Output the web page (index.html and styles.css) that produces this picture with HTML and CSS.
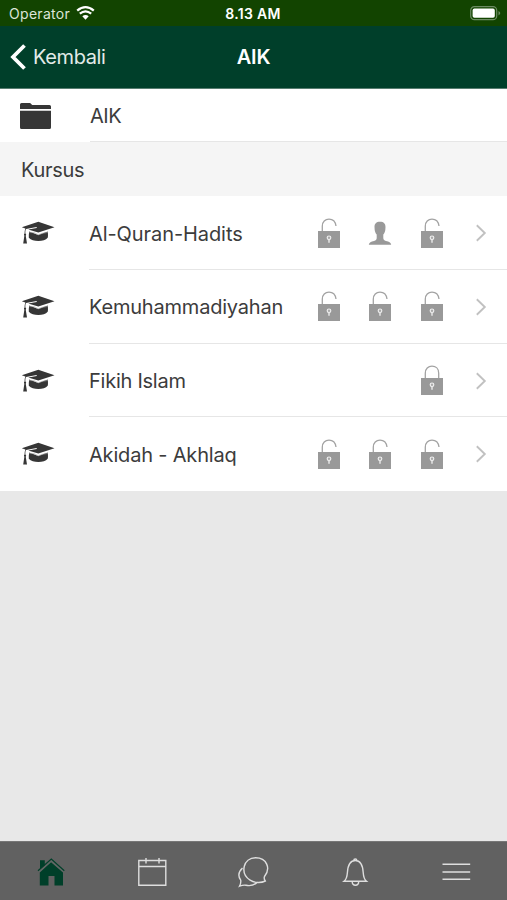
FILE: index.html
```html
<!DOCTYPE html>
<html lang="id">
<head>
<meta charset="utf-8">
<title>AIK</title>
<link rel="stylesheet" href="styles.css">
</head>
<body>
<svg class="defs" width="0" height="0">
  <symbol id="lock-body" viewBox="0 0 24 30">
    <path fill="#999" d="M1 13h22v17H1z"/>
    <circle cx="12" cy="19.8" r="1.8" fill="#aaa" stroke="#eee" stroke-width="1.2"/>
    <path d="M12 21.6v3.2" stroke="#e6e6e6" stroke-width="1.5"/>
  </symbol>
  <symbol id="open" viewBox="0 0 24 30">
    <path d="M5.3 14V8.2C5.3 3.8 8.2 1.2 12 1.2c3.8 0 6.4 2.4 7 6.8" fill="none" stroke="#a3a3a3" stroke-width="1.3"/>
    <use href="#lock-body"/>
  </symbol>
  <symbol id="closed" viewBox="0 0 24 30">
    <path d="M5.3 14V8.2C5.3 3.8 8.2 1.2 12 1.2s6.7 2.6 6.7 7V14" fill="none" stroke="#a3a3a3" stroke-width="1.3"/>
    <use href="#lock-body"/>
  </symbol>
  <symbol id="person" viewBox="0 0 24 30">
    <path fill="#999" d="M12 3.8c-3.8 0-5.6 2-5.5 5.3l.2 2.9c.2 1.9 1 3.4 2 4.6v3.2c0 2-.7 2.6-2.7 3.1-3 .7-4.800 1.200-5.200 3.800h22.400c-.4-2.600-2.200-3.100-5.200-3.800-2-.5-2.700-1.100-2.700-3.100v-3.200c1-1.200 1.800-2.700 2-4.600l.2-2.900c.1-3.300-1.700-5.300-5.500-5.300z"/>
  </symbol>
  <symbol id="chevron" viewBox="0 0 12 18">
    <path d="M1.800 1.200l8 7.800-8 7.800" fill="none" stroke="#c1c1c1" stroke-width="1.900"/>
  </symbol>
  <symbol id="cap" viewBox="0 0 34 24">
    <path fill="#363636" d="M.8 6.300L17.300.8l16.200 5.500L17.300 11.600 7.200 8.500l8.600-1.600-.2-.8L5 7.900c-.5.800-.7 2.300-.6 4.500.9.500 1 1.500.3 2.200l1.300 7.800H2.200l1.200-7.800c-.7-.7-.6-1.700.2-2.200 0-2 .2-3.600.8-4.900z"/>
    <path fill="#363636" d="M8.200 10.500l9 3.400 9.500-3.500c.4 2.300.4 5 0 6.400-1.900 2.200-5.200 3.300-9.300 3.300S9.900 19 7.800 16.800c-.1-2 0-4.200.4-6.300z"/>
    <path d="M8.300 11.600q4.800-1.200 8.900 2.200 4.800-2.200 9.500-2.300" stroke="#aaa" stroke-width=".6" fill="none"/>
  </symbol>
</svg>
<div class="screen">
  <div class="status">
    <div class="carrier"><span>Operator</span>
      <svg width="19" height="14" viewBox="0 0 19 14" fill="none" stroke="#fff"><path d="M1.200 4.600q8.300-6.900 16.600 0M3.800 7.700q5.700-4.700 11.400 0" stroke-width="2.300"/><path d="M6.300 10.300q3.200-2.600 6.400 0L9.500 13.700z" fill="#fff" stroke="none"/></svg>
    </div>
    <div class="time">8.13 AM</div>
    <svg class="battery" width="31" height="15" viewBox="0 0 31 15"><rect x=".7" y=".7" width="26" height="13" rx="3.700" fill="none" stroke="#6c8b62" stroke-width="1.200"/><rect x="2.600" y="2.600" width="22.200" height="9.200" rx="1.800" fill="#fff"/><path d="M28.500 5q3.500 2.200 0 4.500z" fill="#6c8b62"/></svg>
  </div>
  <header class="nav">
    <div class="back">
      <svg width="17" height="26" viewBox="0 0 17 26"><path d="M14.500 1.500L3 13l11.500 11.500" fill="none" stroke="#fff" stroke-width="3.800"/></svg>
      <span>Kembali</span>
    </div>
    <h1>AIK</h1>
  </header>
  <div class="row folder">
    <svg width="31" height="26" viewBox="0 0 30 26" preserveAspectRatio="none" fill="#363636"><path d="M0 6V1.500Q0 0 1.500 0h8.300l2 2h16.700Q30 2 30 3.500V6zM0 7.800h30v16.700q0 1.500-1.500 1.500h-27Q0 26 0 24.500z"/></svg>
    <div class="content"><span class="label aik">AIK</span></div>
  </div>
  <h2>Kursus</h2>
  <div class="row">
    <svg width="34" height="24"><use href="#cap"/></svg>
    <div class="content"><span class="label quran">Al-Quran-Hadits</span>
      <svg class="state"><use href="#open"/></svg><svg class="state"><use href="#person"/></svg><svg class="state"><use href="#open"/></svg><svg class="go"><use href="#chevron"/></svg></div>
  </div>
  <div class="row">
    <svg width="34" height="24"><use href="#cap"/></svg>
    <div class="content"><span class="label kemu">Kemuhammadiyahan</span>
      <svg class="state"><use href="#open"/></svg><svg class="state"><use href="#open"/></svg><svg class="state"><use href="#open"/></svg><svg class="go"><use href="#chevron"/></svg></div>
  </div>
  <div class="row">
    <svg width="34" height="24"><use href="#cap"/></svg>
    <div class="content"><span class="label fikih">Fikih Islam</span>
      <svg class="state"><use href="#closed"/></svg><svg class="go"><use href="#chevron"/></svg></div>
  </div>
  <div class="row last">
    <svg width="34" height="24"><use href="#cap"/></svg>
    <div class="content"><span class="label akidah">Akidah - Akhlaq</span>
      <svg class="state"><use href="#open"/></svg><svg class="state"><use href="#open"/></svg><svg class="state"><use href="#open"/></svg><svg class="go"><use href="#chevron"/></svg></div>
  </div>
  <nav class="tabs">
    <svg viewBox="0 0 32 32"><path fill="#003f29" d="M4.800 15.500L16 5.300l12 10.200V28.500h-8.500v-9.500h-6v9.500h-8.700z"/><path fill="#003f29" d="M5 3.200h4.800v5L5 12z"/><path d="M3 13.700L16.300 2l13 11.700" stroke="#003f29" stroke-width="1.200" fill="none"/><path d="M4 15L16.300 4.300 28.600 15" stroke="#5f706a" stroke-width=".7" fill="none"/></svg>
    <svg viewBox="0 0 32 32"><path d="M2.800 3.500h27v24.700h-27zM2.800 9.500h27M10 1v5.500M23 1v5.500"/></svg>
    <svg viewBox="0 0 32 32"><path d="M28.300 24c-3 1.500-10 2.800-15.200-.8C2.600 16 6.300.7 18.600.7 29.800.7 34 11.500 27.500 19.500 26.800 21 27.300 22.500 28.300 24zM5.500 11C1.300 15 1.100 19.500 3.700 23.200c.4 2-.2 4-1.200 6 2.500-.9 4.600-1.300 6.500-.9 4.500 1 8.300-.1 11.600-3.300"/></svg>
    <svg viewBox="0 0 32 32"><path d="M5 24.300h22.500c-2.500-2-3-4.300-3.300-8.800-.5-8-2.700-12-7.900-12S8.900 7.500 8.400 15.500C8.100 20 7.500 22.300 5 24.300zM13.200 24.500c0 5 6.500 5 6.500 0M14.800 3.500c0-2.200 3-2.200 3 0"/></svg>
    <svg viewBox="0 0 32 32"><path d="M2.500 7.300h27.700M2.500 15h27.700M2.500 22.300h27.700"/></svg>
  </nav>
</div>
</body>
</html>
```
FILE: styles.css
```css
* { box-sizing: border-box; }
body { margin: 0; font-family: Inter, "Liberation Sans", sans-serif; background: #e8e8e8; }
svg { display: block; flex: none; overflow: visible; }
.defs { height: 0; }
.screen { width: 507px; height: 900px; display: flex; flex-direction: column; background: #e8e8e8; color: #3c3c3c; overflow: hidden; }
.status { height: 26px; flex: none; display: grid; grid-template-columns: 1fr auto 1fr; align-items: center; padding: 1px 6px 0 9px; background: #124400; color: #fff; font-size: 14px; }
.carrier { display: flex; gap: 6px; align-items: center; letter-spacing: .3px; color: #dce5d9; }
.carrier svg { margin-top: -2px; }
.time { font-weight: 600; font-size: 14px; letter-spacing: .3px; margin-left: -4px; }
.battery { justify-self: end; }
.nav { height: 63px; flex: none; display: grid; grid-template-columns: 1fr auto 1fr; align-items: center; padding: 0 10px; background: #003f2a; border-bottom: 1px solid #577d70; color: #fff; }
.back { display: flex; align-items: center; gap: 6px; font-size: 20px; letter-spacing: -.4px; color: #e3ebe8; }
h1 { margin: 0; font-size: 20px; font-weight: 600; letter-spacing: -.2px; }
h2 { margin: 0; height: 54.400px; flex: none; padding: 0 21px; font-size: 20px; line-height: 56px; font-weight: 400; letter-spacing: -.3px; background: #f5f5f5; }
.row { height: 73.700px; flex: none; display: flex; align-items: center; gap: 34px; padding-left: 21px; background: #fff; }
.folder { height: 53px; gap: 39px; padding-left: 20px; }
.content { flex: 1; height: 100%; display: flex; align-items: center; border-bottom: 1px solid #e6e6e6; padding-right: 20px; }
.last { height: 73.300px; }
.last .content { border-color: #fff; }
.label { flex: 1; white-space: nowrap; font-size: 20px; padding-top: 2px; }
.aik { letter-spacing: -.5px; }
.quran { letter-spacing: -.08px; }
.kemu { letter-spacing: -.2px; }
.fikih { letter-spacing: -.25px; }
.akidah { letter-spacing: -.18px; }
.state { width: 24px; height: 30px; margin-right: 27.500px; }
.go { width: 12px; height: 18px; margin: 1px 0 0 4px; }
.tabs { height: 59px; flex: none; margin-top: auto; display: grid; grid-template-columns: repeat(5, 1fr); justify-items: center; align-items: center; background: #616161; border-top: 1px solid #777; padding-top: 4px; }
.tabs svg { width: 32px; height: 32px; fill: none; stroke: #dedede; stroke-width: 1.400; }
.tabs svg:first-child { stroke: none; }
```
